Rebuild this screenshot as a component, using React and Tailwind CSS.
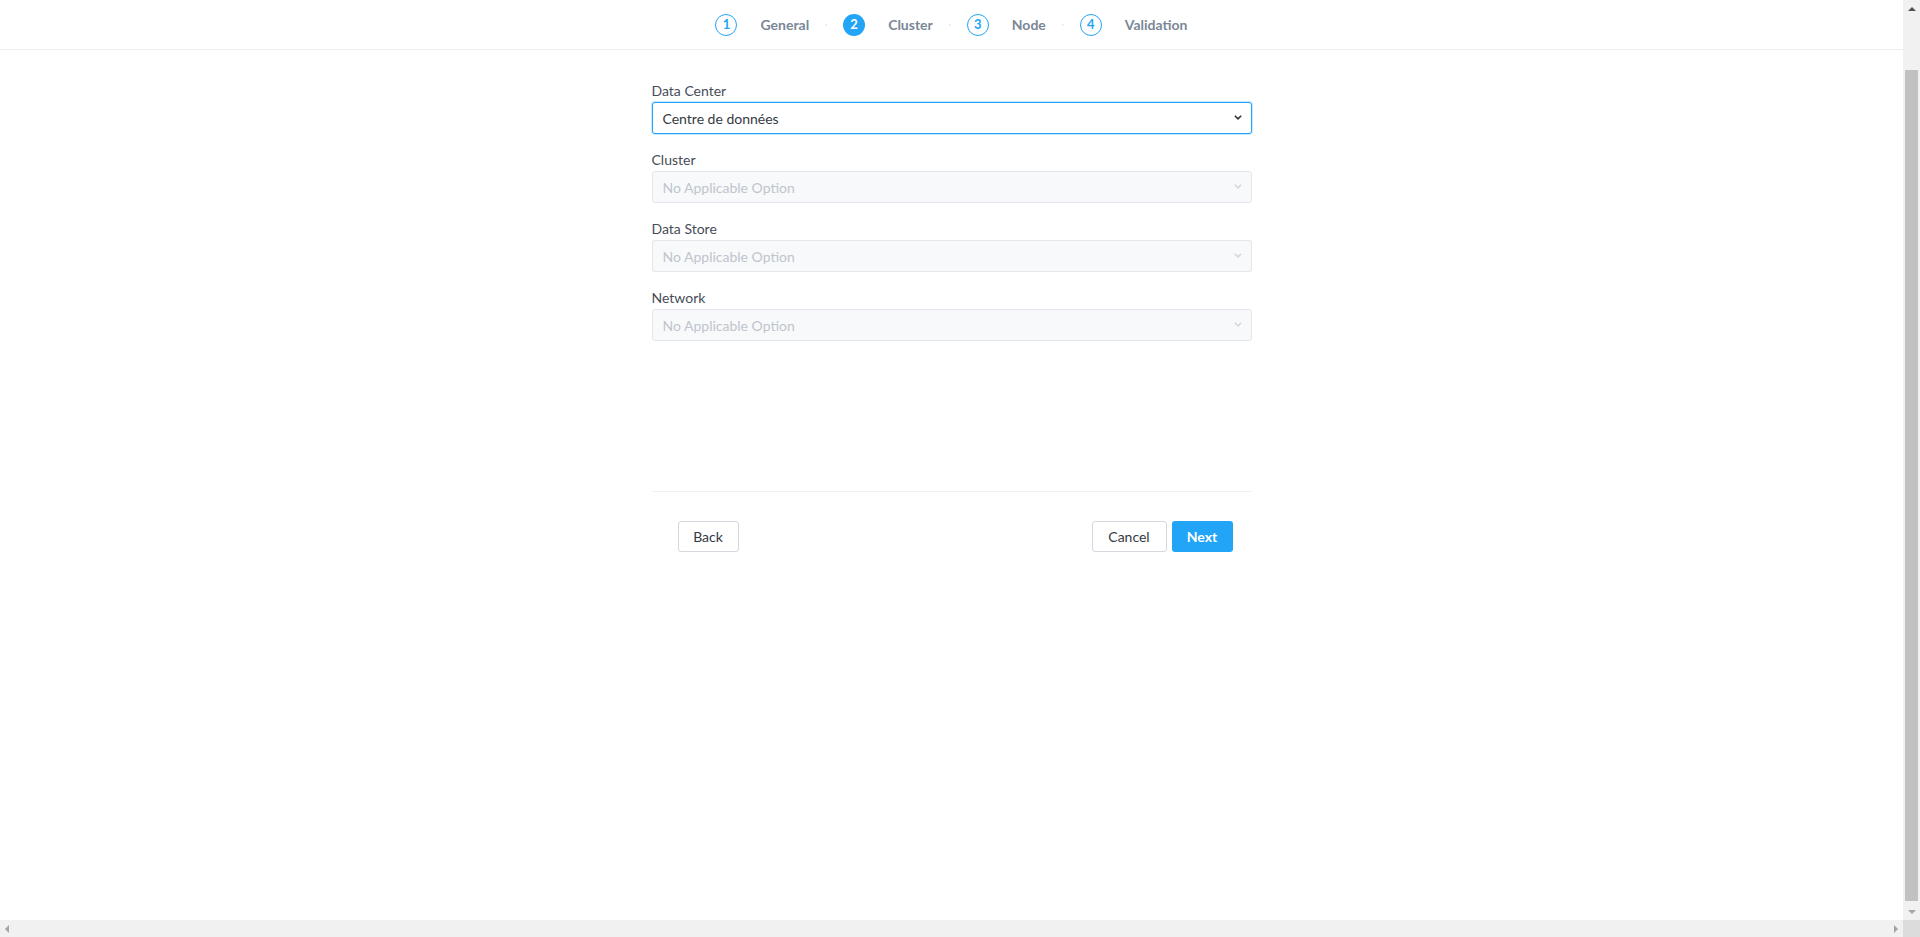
import React from 'react';

const steps = [
  { n: 1, label: 'General' },
  { n: 2, label: 'Cluster', active: true },
  { n: 3, label: 'Node' },
  { n: 4, label: 'Validation' },
];

const fields = [
  { label: 'Data Center', value: 'Centre de données', enabled: true },
  { label: 'Cluster', value: 'No Applicable Option' },
  { label: 'Data Store', value: 'No Applicable Option' },
  { label: 'Network', value: 'No Applicable Option' },
];

const Chevron = ({ className }) => (
  <svg className={className} width="8" height="6" viewBox="0 0 8 6" fill="currentColor">
    <path d="M0.3 1.2 L1.4 0.2 L4 2.8 L6.6 0.2 L7.7 1.2 L4 4.9 Z" />
  </svg>
);

const Stepper = () => (
  <div className="flex items-center">
    {steps.map((s, i) => (
      <React.Fragment key={s.n}>
        <div className="flex items-center">
          <div
            className={
              s.active
                ? 'flex h-[22px] w-[22px] items-center justify-center rounded-full bg-[#22a5f7] text-[13px] font-bold text-white'
                : 'flex h-[22px] w-[22px] items-center justify-center rounded-full border-[1.5px] border-[#22a5f7] text-[13px] font-bold text-[#22a5f7]'
            }
          >
            {s.n}
          </div>
          <span className="ml-[23px] text-[14px] font-bold text-[#7b8797]">{s.label}</span>
        </div>
        {i < steps.length - 1 && (
          <div className="flex w-[34px] justify-center">
            <div className="h-[2px] w-[2px] rounded-full bg-[#e6e8eb]"></div>
          </div>
        )}
      </React.Fragment>
    ))}
  </div>
);

const SelectField = ({ label, value, enabled }) => (
  <div>
    <div className="mb-px text-[14px] leading-5 text-[#474d57]">{label}</div>
    <div
      className={
        enabled
          ? 'flex h-8 items-center justify-between rounded-[3px] border border-[#22a5f7] bg-white pl-[10px] pr-[9px] text-[14px] text-[#333a44] shadow-[0_0_0_1px_rgba(34,165,247,0.25)]'
          : 'flex h-8 items-center justify-between rounded-[3px] border border-[#e3e6ea] bg-[#f8f9fa] pl-[10px] pr-[9px] text-[14px] text-[#bec5cd]'
      }
    >
      <span>{value}</span>
      <Chevron className={enabled ? 'text-[#2b2f36]' : 'text-[#d3d7dc]'} />
    </div>
  </div>
);

export default function App() {
  return (
    <div className="flex h-screen w-full flex-col overflow-hidden bg-white font-['Lato','Liberation_Sans',sans-serif]">
      <div className="flex min-h-0 flex-1">
        <div className="flex min-w-0 flex-1 flex-col">
          <header className="flex h-[50px] shrink-0 items-center justify-center border-b border-[#eceef0]">
            <Stepper />
          </header>
          <main className="flex justify-center pt-[31px]">
            <div className="w-[600px]">
              <div className="flex flex-col gap-4">
                {fields.map((f) => (
                  <SelectField key={f.label} {...f} />
                ))}
              </div>
              <div className="mt-[150px] border-t border-[#eff1f3] pl-[26px] pr-[19px] pt-[29px]">
                <div className="flex items-center justify-between">
                  <button className="h-[31px] w-[61px] rounded-[3px] border border-[#d3d8de] bg-white text-[14px] text-[#333a44]">
                    Back
                  </button>
                  <div className="flex gap-[5px]">
                    <button className="h-[31px] w-[75px] rounded-[3px] border border-[#d3d8de] bg-white text-[14px] text-[#333a44]">
                      Cancel
                    </button>
                    <button className="h-[31px] w-[61px] rounded-[3px] bg-[#22a5f7] text-[14px] font-bold text-white">
                      Next
                    </button>
                  </div>
                </div>
              </div>
            </div>
          </main>
        </div>
        {/* vertical scrollbar */}
        <div className="flex w-[17px] shrink-0 flex-col items-center bg-[#f1f1f1]">
          <div className="flex h-[17px] items-center justify-center">
            <div className="h-0 w-0 border-x-[4px] border-b-[4px] border-x-transparent border-b-[#505050]"></div>
          </div>
          <div className="mt-[53px] w-[13px] flex-1 bg-[#c1c1c1]"></div>
          <div className="mt-[2px] flex h-[17px] items-center justify-center">
            <div className="h-0 w-0 border-x-[4px] border-t-[4px] border-x-transparent border-t-[#a3a3a3]"></div>
          </div>
        </div>
      </div>
      {/* horizontal scrollbar */}
      <div className="flex h-[17px] shrink-0">
        <div className="flex flex-1 items-center justify-between bg-[#f1f1f1] px-[5px]">
          <div className="h-0 w-0 border-y-[4px] border-r-[4px] border-y-transparent border-r-[#a3a3a3]"></div>
          <div className="h-0 w-0 border-y-[4px] border-l-[4px] border-y-transparent border-l-[#a3a3a3]"></div>
        </div>
        <div className="w-[17px] bg-[#dcdcdc]"></div>
      </div>
    </div>
  );
}
